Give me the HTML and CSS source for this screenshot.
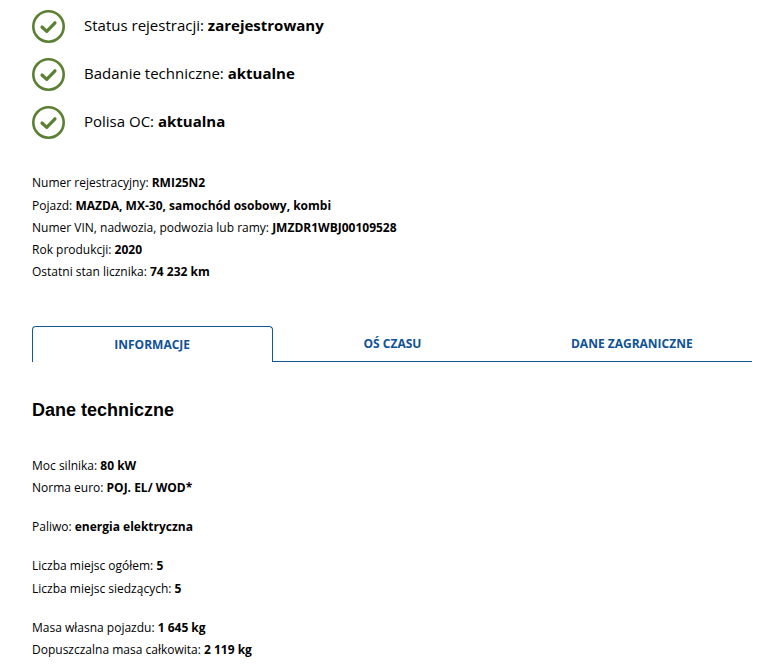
FILE: index.html
```html
<!DOCTYPE html>
<html lang="pl">
<head>
    <meta charset="UTF-8">
    <meta name="viewport" content="width=device-width, initial-scale=1.0">
    <title>Historia pojazdu</title>
    <link rel="stylesheet" href="styles.css">
</head>
<body>
    <div class="page">
        <ul class="status-list">
            <li class="status-item">
                <svg class="status-icon" viewBox="0 0 33 33"><circle cx="16.5" cy="16.5" r="15.2"/><path d="M10 17 L14.7 21.4 L23 12.8"/></svg>
                <span class="status-text">Status rejestracji: <b>zarejestrowany</b></span>
            </li>
            <li class="status-item">
                <svg class="status-icon" viewBox="0 0 33 33"><circle cx="16.5" cy="16.5" r="15.2"/><path d="M10 17 L14.7 21.4 L23 12.8"/></svg>
                <span class="status-text">Badanie techniczne: <b>aktualne</b></span>
            </li>
            <li class="status-item">
                <svg class="status-icon" viewBox="0 0 33 33"><circle cx="16.5" cy="16.5" r="15.2"/><path d="M10 17 L14.7 21.4 L23 12.8"/></svg>
                <span class="status-text">Polisa OC: <b>aktualna</b></span>
            </li>
        </ul>

        <div class="vehicle-info">
            <p>Numer rejestracyjny: <b>RMI25N2</b></p>
            <p>Pojazd: <b>MAZDA, MX-30, samochód osobowy, kombi</b></p>
            <p>Numer VIN, nadwozia, podwozia lub ramy: <b>JMZDR1WBJ00109528</b></p>
            <p>Rok produkcji: <b>2020</b></p>
            <p>Ostatni stan licznika: <b>74 232 km</b></p>
        </div>

        <div class="tabs">
            <div class="tab active">INFORMACJE</div>
            <div class="tab">OŚ CZASU</div>
            <div class="tab">DANE ZAGRANICZNE</div>
        </div>

        <h2 class="section-title">Dane techniczne</h2>

        <div class="data-group">
            <p>Moc silnika: <b>80 kW</b></p>
            <p>Norma euro: <b>POJ. EL/ WOD*</b></p>
        </div>
        <div class="data-group">
            <p>Paliwo: <b>energia elektryczna</b></p>
        </div>
        <div class="data-group">
            <p>Liczba miejsc ogółem: <b>5</b></p>
            <p>Liczba miejsc siedzących: <b>5</b></p>
        </div>
        <div class="data-group">
            <p>Masa własna pojazdu: <b>1 645 kg</b></p>
            <p>Dopuszczalna masa całkowita: <b>2 119 kg</b></p>
        </div>
    </div>
</body>
</html>
```

FILE: styles.css
```css
html, body {
    height: 100%;
    overflow: hidden;
}
body {
    margin: 0;
    background: white;
    color: #000;
    font-family: "Open Sans", sans-serif;
    font-size: 12px;
}
.page {
    padding: 10px 17px 0 32px;
}
p {
    margin: 0;
}
.status-list {
    list-style: none;
    margin: 0;
    padding: 0;
}
.status-item {
    display: flex;
    align-items: center;
    gap: 19px;
    height: 33px;
    margin-bottom: 15px;
    font-size: 15px;
}
.status-text {
    padding-bottom: 3px;
}
.status-icon {
    width: 33px;
    height: 33px;
    flex: none;
    fill: none;
    stroke: #5b8032;
    stroke-width: 2.6;
}
.status-icon path {
    stroke-width: 3.2;
    stroke-linecap: round;
    stroke-linejoin: round;
}
.vehicle-info {
    margin-top: 33.4px;
    line-height: 22.25px;
}
.tabs {
    display: flex;
    margin-top: 42.6px;
}
.tab {
    flex: 1;
    height: 36px;
    box-sizing: border-box;
    padding-right: 1px;
    border-bottom: 1px solid #0f5a96;
    display: flex;
    align-items: center;
    justify-content: center;
    color: #0f5296;
    font-weight: 700;
}
.tab.active {
    border: 1px solid #0f5a96;
    border-bottom: none;
    border-radius: 4px 4px 0 0;
}
.section-title {
    margin: 37px 0 34px;
    font-family: "Liberation Sans", sans-serif;
    font-size: 18px;
    line-height: 22px;
}
.data-group {
    line-height: 22.25px;
    margin-bottom: 16.75px;
}
```
